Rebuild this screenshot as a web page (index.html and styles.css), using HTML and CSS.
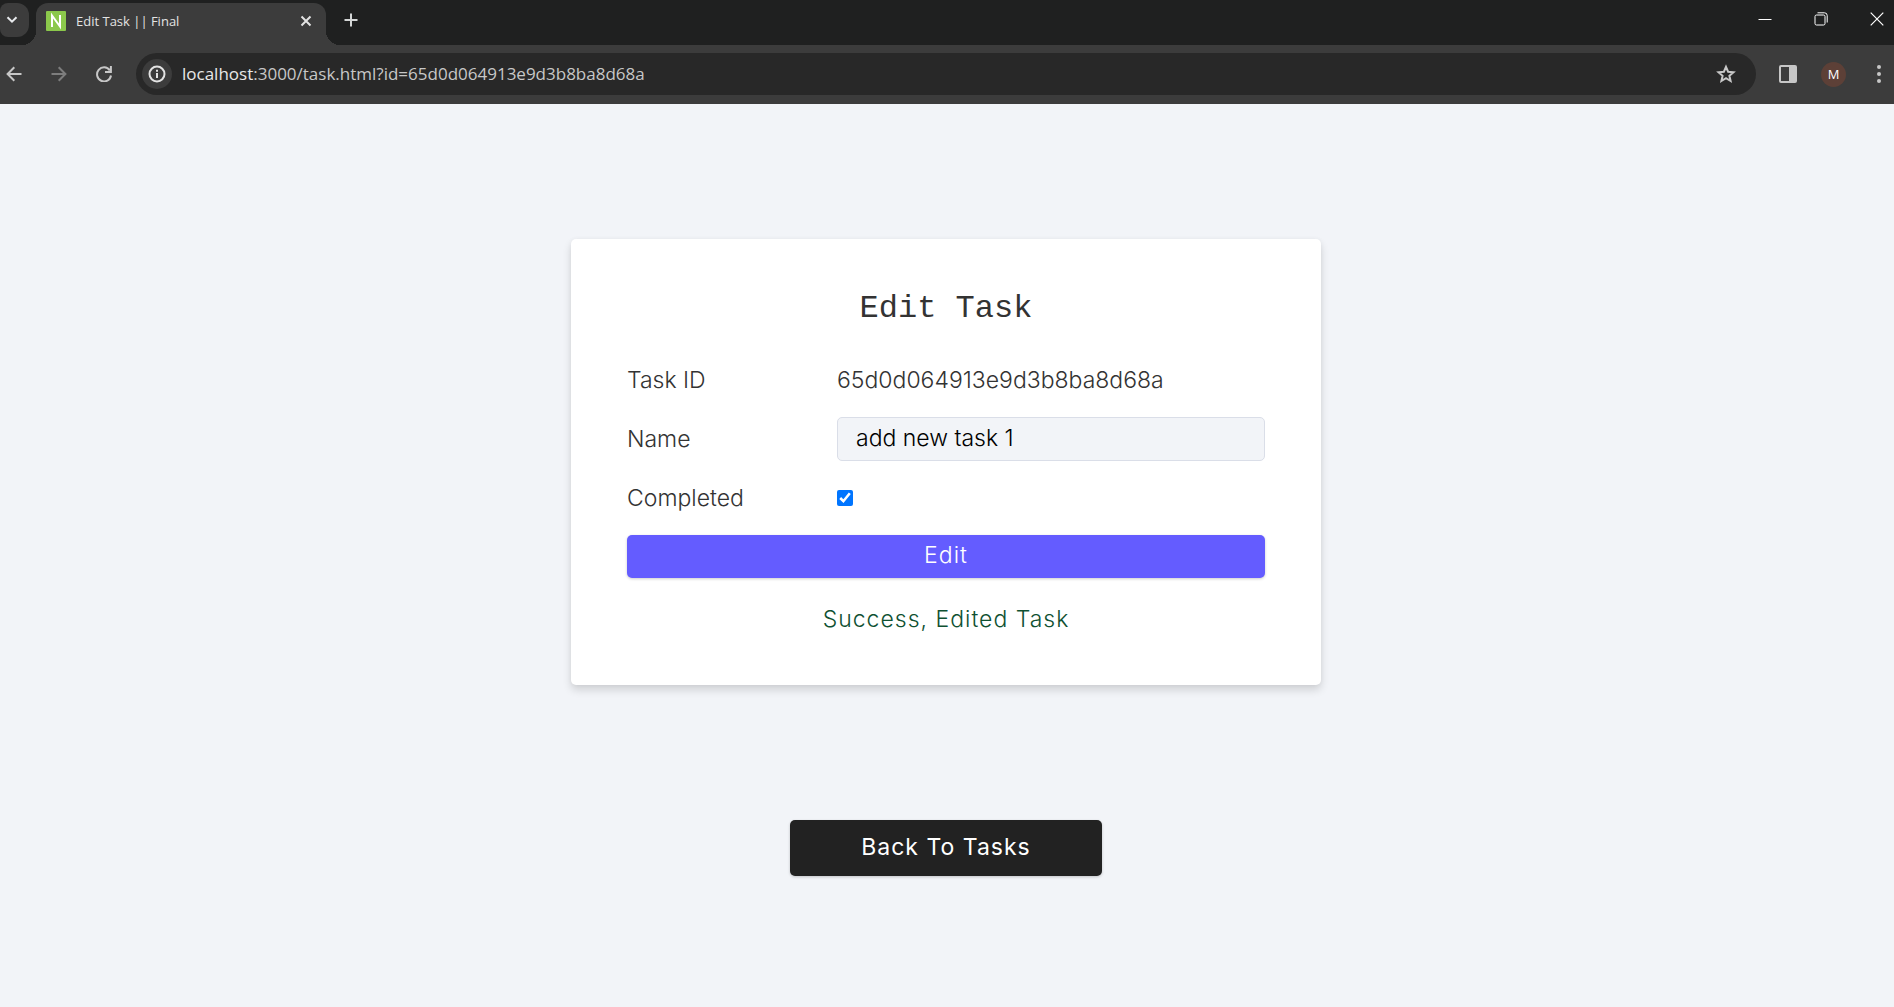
FILE: index.html
```html
<!DOCTYPE html>
<html lang="en">
<head>
<meta charset="utf-8">
<meta name="viewport" content="width=device-width, initial-scale=1">
<title>Edit Task || Final</title>
<link rel="stylesheet" href="styles.css">
</head>
<body>
<header class="browser">
  <div class="tab-strip">
    <button class="tab-search" type="button" aria-label="Search tabs">
      <svg width="12" height="8" viewBox="0 0 12 8" fill="none" stroke="#e8eaed" stroke-width="2"><path d="M1.5 1.2 6 5.7l4.500-4.500"/></svg>
    </button>
    <div class="tab">
      <svg class="favicon" width="20" height="20" viewBox="0 0 20 20"><rect width="20" height="20" rx="1" fill="#8bc84b"/><path d="M6 16V4.500L14 15.500V4" fill="none" stroke="#fff" stroke-width="2"/></svg>
      <span class="tab-title">Edit Task || Final</span>
      <button class="icon-button" type="button" aria-label="Close tab">
        <svg width="12" height="12" viewBox="0 0 12 12" stroke="#e3e3e3" stroke-width="2"><path d="m1.500 1.500 9 9m0-9-9 9"/></svg>
      </button>
    </div>
    <button class="icon-button new-tab" type="button" aria-label="New tab">
      <svg width="14" height="14" viewBox="0 0 14 14" stroke="#d5d7d7" stroke-width="2"><path d="M7 .5v13M.5 7h13"/></svg>
    </button>
    <div class="window-controls">
      <button class="icon-button" type="button" aria-label="Minimize">
        <svg width="14" height="14" viewBox="0 0 14 14" stroke="#fff"><path d="M.5 7.500h13"/></svg>
      </button>
      <button class="icon-button" type="button" aria-label="Restore">
        <svg width="14" height="14" viewBox="0 0 14 14" fill="none" stroke="#fff"><rect x="1" y="3" width="10" height="10" rx="1.500"/><path d="M3.500.8h7a2.700 2.700 0 0 1 2.700 2.700v7"/></svg>
      </button>
      <button class="icon-button" type="button" aria-label="Close window">
        <svg width="14" height="14" viewBox="0 0 14 14" stroke="#fff" stroke-width="1.200"><path d="m.7.700 12.600 12.600m0-12.600L.7 13.300"/></svg>
      </button>
    </div>
  </div>
  <div class="toolbar">
    <nav class="history">
      <button class="icon-button" type="button" aria-label="Back">
        <svg width="16" height="16" viewBox="0 0 16 16" fill="none" stroke="#c7c7c7" stroke-width="2"><path d="M15.500 8H2M8.300 1.300 1.600 8l6.700 6.700"/></svg>
      </button>
      <button class="icon-button" type="button" aria-label="Forward">
        <svg width="16" height="16" viewBox="0 0 16 16" fill="none" stroke="#7d7d7d" stroke-width="2"><path d="M.5 8H14M7.700 1.300 14.400 8l-6.700 6.700"/></svg>
      </button>
      <button class="icon-button" type="button" aria-label="Reload">
        <svg width="16" height="16" viewBox="0 0 16 16" fill="none" stroke="#c7c7c7" stroke-width="2"><path d="M13.800 4.300A7 7 0 1 0 15 9.500M14.900 0v6H9"/></svg>
      </button>
    </nav>
    <div class="address-bar">
      <span class="site-info">
        <svg width="18" height="18" viewBox="0 0 18 18" fill="none" stroke="#e3e3e3" stroke-width="2"><circle cx="9" cy="9" r="7.500"/><path d="M9 8v5M9 4.800v2"/></svg>
      </span>
      <span class="url"><span class="host">localhost</span>:3000/task.html?id=65d0d064913e9d3b8ba8d68a</span>
      <button class="icon-button" type="button" aria-label="Bookmark this tab">
        <svg width="20" height="20" viewBox="0 0 20 20" fill="none" stroke="#c7c7c7" stroke-width="2"><path d="m10 2.800 2.100 4.900 5.400.5-4.100 3.600 1.200 5.200L10 14.200 5.400 17l1.200-5.200L2.500 8.200l5.400-.5z"/></svg>
      </button>
    </div>
    <div class="toolbar-actions">
      <button class="icon-button" type="button" aria-label="Side panel">
        <svg width="20" height="20" viewBox="0 0 20 20"><rect x="2" y="2" width="16" height="16" rx="1" fill="none" stroke="#c7c7c7" stroke-width="2"/><path d="M11 2h7v16h-7z" fill="#c7c7c7"/></svg>
      </button>
      <button class="avatar" type="button" aria-label="Profile">M</button>
      <button class="icon-button" type="button" aria-label="Menu">
        <svg width="20" height="20" viewBox="0 0 20 20" fill="#c7c7c7"><circle cx="10" cy="3" r="2"/><circle cx="10" cy="10" r="2"/><circle cx="10" cy="17" r="2"/></svg>
      </button>
    </div>
  </div>
</header>
<main class="page">
  <form class="card">
    <h1 class="card-title">Edit Task</h1>
    <div class="field">
      <span>Task ID</span>
      <span>65d0d064913e9d3b8ba8d68a</span>
    </div>
    <div class="field">
      <label for="name">Name</label>
      <input class="text-input" id="name" type="text" value="add new task 1">
    </div>
    <div class="field">
      <label for="completed">Completed</label>
      <input class="checkbox" id="completed" type="checkbox" checked>
    </div>
    <button class="submit" type="button">Edit</button>
    <p class="message">Success, Edited Task</p>
  </form>
  <a class="back-link" href="#">Back To Tasks</a>
</main>
</body>
</html>
```
FILE: styles.css
```css
* {
  box-sizing: border-box;
}

body {
  margin: 0;
  min-height: 100vh;
  background: #f2f4f8;
  color: #333;
  font: 300 23px/28px Inter, "Open Sans", sans-serif;
}

button {
  padding: 0;
  border: 0;
  background: none;
  font: inherit;
  color: inherit;
}

.browser {
  background: #3c3c3c;
  font: 400 17px/24px "Open Sans", "Noto Sans", sans-serif;
  color: #c7c7c7;
}

.icon-button {
  display: grid;
  place-items: center;
  width: 20px;
  height: 20px;
}

.tab-strip {
  display: flex;
  align-items: flex-start;
  height: 45px;
  padding-top: 3px;
  background: #1f2020;
}

.tab-search {
  display: grid;
  place-items: center;
  width: 29px;
  height: 34px;
  margin-right: 7px;
  padding-right: 6px;
  border-radius: 8px 12px 12px 8px;
  background: #3c3c3c;
}

.tab {
  position: relative;
  display: flex;
  align-items: center;
  gap: 10px;
  width: 290px;
  height: 42px;
  padding: 0 10px 7px;
  border-radius: 12px 12px 0 0;
  background: #3c3c3c;
}

.tab::before,
.tab::after {
  content: "";
  position: absolute;
  bottom: 0;
  width: 14px;
  height: 14px;
}

.tab::before {
  right: 100%;
  background: radial-gradient(circle at 0 0, transparent 14px, #3c3c3c 14px);
}

.tab::after {
  left: 100%;
  background: radial-gradient(circle at 100% 0, transparent 14px, #3c3c3c 14px);
}

.tab-title {
  flex: 1;
  font-size: 13px;
  color: #e3e3e3;
}

.new-tab {
  margin: 7px 15px;
}

.window-controls {
  display: flex;
  gap: 36px;
  margin: 6px 7px 0 auto;
}

.toolbar {
  display: flex;
  align-items: center;
  gap: 22px;
  height: 59px;
  padding: 0 5px 1px 4px;
}

.history {
  display: flex;
  gap: 25px;
}

.address-bar {
  display: flex;
  flex: 1;
  align-items: center;
  gap: 10px;
  height: 42px;
  padding: 0 20px 0 6px;
  border-radius: 21px;
  background: #282828;
}

.site-info {
  display: grid;
  place-items: center;
  width: 30px;
  height: 30px;
  border-radius: 50%;
  background: #3c3c3c;
}

.url {
  flex: 1;
}

.host {
  color: #e8e8e8;
}

.toolbar-actions {
  display: flex;
  align-items: center;
  gap: 23px;
}

.avatar {
  width: 25px;
  height: 25px;
  border-radius: 50%;
  background: #5d4037;
  color: #fff;
  font-size: 13px;
}

.page {
  display: flex;
  flex-direction: column;
  align-items: center;
  gap: 135px;
  padding: 135px 18px 48px 16px;
}

.card {
  display: flex;
  flex-direction: column;
  gap: 15px;
  width: 100%;
  max-width: 750px;
  padding: 50px 56px 52px;
  border-radius: 5px;
  background: #fff;
  box-shadow: 0 5px 8px rgba(0, 0, 0, 0.14), 0 0 5px rgba(0, 0, 0, 0.04);
}

.card-title {
  margin: 0 0 14px;
  font: 400 32px/40px "Liberation Mono", monospace;
  text-align: center;
}

.field {
  display: grid;
  grid-template-columns: 210px 1fr;
  align-items: center;
  min-height: 44px;
}

.text-input {
  width: 100%;
  height: 44px;
  padding: 0 18px 2px;
  border: 1px solid #dadee8;
  border-radius: 5px;
  background: #f2f4f8;
  color: #000;
  font: inherit;
}

.checkbox {
  width: 16px;
  height: 16px;
  margin: 0;
}

.submit,
.back-link {
  border-radius: 5px;
  color: #fff;
  letter-spacing: 1px;
  text-align: center;
  box-shadow: 0 1px 3px rgba(0, 0, 0, 0.2);
}

.submit {
  height: 43px;
  padding-bottom: 3px;
  background: #645cff;
}

.message {
  margin: 12px 0 0;
  color: #0f5132;
  letter-spacing: 1px;
  text-align: center;
}

.back-link {
  width: 312px;
  padding: 13px 0 15px;
  background: #222;
  font-weight: 400;
  text-decoration: none;
}
```
